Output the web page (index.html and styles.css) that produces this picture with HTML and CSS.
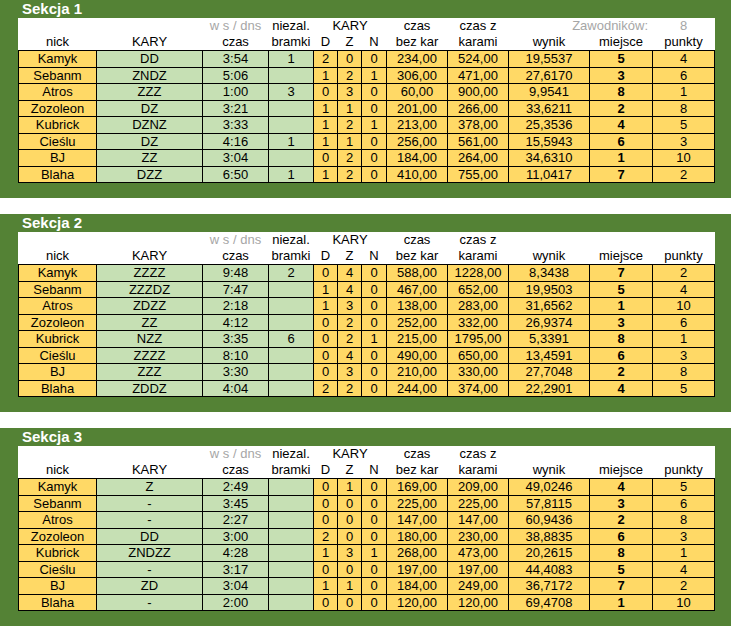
FILE: index.html
```html
<!DOCTYPE html>
<html lang="pl">
<head>
<meta charset="utf-8">
<title>Sekcje</title>
<link rel="stylesheet" href="styles.css">
</head>
<body>

<section class="sec">
  <h2 class="title">Sekcja 1</h2>
  <div class="head">
    <span></span><span></span><span class="grey">w s / dns</span><span>niezal.</span><span class="span3">KARY</span><span>czas</span><span>czas z</span><span class="grey span2 right">Zawodników:</span><span class="grey">8</span>
    <span>nick</span><span>KARY</span><span>czas</span><span>bramki</span><span>D</span><span>Z</span><span>N</span><span>bez kar</span><span>karami</span><span>wynik</span><span>miejsce</span><span>punkty</span>
  </div>
  <div class="data">
    <div class="row"><span>Kamyk</span><span>DD</span><span>3:54</span><span>1</span><span>2</span><span>0</span><span>0</span><span>234,00</span><span>524,00</span><span>19,5537</span><span>5</span><span>4</span></div>
    <div class="row"><span>Sebanm</span><span>ZNDZ</span><span>5:06</span><span></span><span>1</span><span>2</span><span>1</span><span>306,00</span><span>471,00</span><span>27,6170</span><span>3</span><span>6</span></div>
    <div class="row"><span>Atros</span><span>ZZZ</span><span>1:00</span><span>3</span><span>0</span><span>3</span><span>0</span><span>60,00</span><span>900,00</span><span>9,9541</span><span>8</span><span>1</span></div>
    <div class="row"><span>Zozoleon</span><span>DZ</span><span>3:21</span><span></span><span>1</span><span>1</span><span>0</span><span>201,00</span><span>266,00</span><span>33,6211</span><span>2</span><span>8</span></div>
    <div class="row"><span>Kubrick</span><span>DZNZ</span><span>3:33</span><span></span><span>1</span><span>2</span><span>1</span><span>213,00</span><span>378,00</span><span>25,3536</span><span>4</span><span>5</span></div>
    <div class="row"><span>Cieślu</span><span>DZ</span><span>4:16</span><span>1</span><span>1</span><span>1</span><span>0</span><span>256,00</span><span>561,00</span><span>15,5943</span><span>6</span><span>3</span></div>
    <div class="row"><span>BJ</span><span>ZZ</span><span>3:04</span><span></span><span>0</span><span>2</span><span>0</span><span>184,00</span><span>264,00</span><span>34,6310</span><span>1</span><span>10</span></div>
    <div class="row"><span>Blaha</span><span>DZZ</span><span>6:50</span><span>1</span><span>1</span><span>2</span><span>0</span><span>410,00</span><span>755,00</span><span>11,0417</span><span>7</span><span>2</span></div>
  </div>
</section>

<section class="sec">
  <h2 class="title">Sekcja 2</h2>
  <div class="head">
    <span></span><span></span><span class="grey">w s / dns</span><span>niezal.</span><span class="span3">KARY</span><span>czas</span><span>czas z</span><span class="span2"></span><span></span>
    <span>nick</span><span>KARY</span><span>czas</span><span>bramki</span><span>D</span><span>Z</span><span>N</span><span>bez kar</span><span>karami</span><span>wynik</span><span>miejsce</span><span>punkty</span>
  </div>
  <div class="data">
    <div class="row"><span>Kamyk</span><span>ZZZZ</span><span>9:48</span><span>2</span><span>0</span><span>4</span><span>0</span><span>588,00</span><span>1228,00</span><span>8,3438</span><span>7</span><span>2</span></div>
    <div class="row"><span>Sebanm</span><span>ZZZDZ</span><span>7:47</span><span></span><span>1</span><span>4</span><span>0</span><span>467,00</span><span>652,00</span><span>19,9503</span><span>5</span><span>4</span></div>
    <div class="row"><span>Atros</span><span>ZDZZ</span><span>2:18</span><span></span><span>1</span><span>3</span><span>0</span><span>138,00</span><span>283,00</span><span>31,6562</span><span>1</span><span>10</span></div>
    <div class="row"><span>Zozoleon</span><span>ZZ</span><span>4:12</span><span></span><span>0</span><span>2</span><span>0</span><span>252,00</span><span>332,00</span><span>26,9374</span><span>3</span><span>6</span></div>
    <div class="row"><span>Kubrick</span><span>NZZ</span><span>3:35</span><span>6</span><span>0</span><span>2</span><span>1</span><span>215,00</span><span>1795,00</span><span>5,3391</span><span>8</span><span>1</span></div>
    <div class="row"><span>Cieślu</span><span>ZZZZ</span><span>8:10</span><span></span><span>0</span><span>4</span><span>0</span><span>490,00</span><span>650,00</span><span>13,4591</span><span>6</span><span>3</span></div>
    <div class="row"><span>BJ</span><span>ZZZ</span><span>3:30</span><span></span><span>0</span><span>3</span><span>0</span><span>210,00</span><span>330,00</span><span>27,7048</span><span>2</span><span>8</span></div>
    <div class="row"><span>Blaha</span><span>ZDDZ</span><span>4:04</span><span></span><span>2</span><span>2</span><span>0</span><span>244,00</span><span>374,00</span><span>22,2901</span><span>4</span><span>5</span></div>
  </div>
</section>

<section class="sec">
  <h2 class="title">Sekcja 3</h2>
  <div class="head">
    <span></span><span></span><span class="grey">w s / dns</span><span>niezal.</span><span class="span3">KARY</span><span>czas</span><span>czas z</span><span class="span2"></span><span></span>
    <span>nick</span><span>KARY</span><span>czas</span><span>bramki</span><span>D</span><span>Z</span><span>N</span><span>bez kar</span><span>karami</span><span>wynik</span><span>miejsce</span><span>punkty</span>
  </div>
  <div class="data">
    <div class="row"><span>Kamyk</span><span>Z</span><span>2:49</span><span></span><span>0</span><span>1</span><span>0</span><span>169,00</span><span>209,00</span><span>49,0246</span><span>4</span><span>5</span></div>
    <div class="row"><span>Sebanm</span><span>-</span><span>3:45</span><span></span><span>0</span><span>0</span><span>0</span><span>225,00</span><span>225,00</span><span>57,8115</span><span>3</span><span>6</span></div>
    <div class="row"><span>Atros</span><span>-</span><span>2:27</span><span></span><span>0</span><span>0</span><span>0</span><span>147,00</span><span>147,00</span><span>60,9436</span><span>2</span><span>8</span></div>
    <div class="row"><span>Zozoleon</span><span>DD</span><span>3:00</span><span></span><span>2</span><span>0</span><span>0</span><span>180,00</span><span>230,00</span><span>38,8835</span><span>6</span><span>3</span></div>
    <div class="row"><span>Kubrick</span><span>ZNDZZ</span><span>4:28</span><span></span><span>1</span><span>3</span><span>1</span><span>268,00</span><span>473,00</span><span>20,2615</span><span>8</span><span>1</span></div>
    <div class="row"><span>Cieślu</span><span>-</span><span>3:17</span><span></span><span>0</span><span>0</span><span>0</span><span>197,00</span><span>197,00</span><span>44,4083</span><span>5</span><span>4</span></div>
    <div class="row"><span>BJ</span><span>ZD</span><span>3:04</span><span></span><span>1</span><span>1</span><span>0</span><span>184,00</span><span>249,00</span><span>36,7172</span><span>7</span><span>2</span></div>
    <div class="row"><span>Blaha</span><span>-</span><span>2:00</span><span></span><span>0</span><span>0</span><span>0</span><span>120,00</span><span>120,00</span><span>69,4708</span><span>1</span><span>10</span></div>
  </div>
</section>

</body>
</html>
```
FILE: styles.css
```css
html, body {
  margin: 0;
  padding: 0;
  background: #ffffff;
}

body {
  font-family: "Liberation Sans", Arial, sans-serif;
  font-size: 13px;
  color: #000000;
  width: 731px;
}

.sec {
  background: #548235;
  height: 198px;
  box-sizing: border-box;
  padding: 0 16px 0 18px;
  margin-bottom: 16px;
}

.title {
  margin: 0;
  height: 18px;
  line-height: 18px;
  padding-left: 4px;
  font-size: 15px;
  font-weight: bold;
  color: #ffffff;
}

.head,
.data {
  display: grid;
  grid-template-columns: 77px 105px 65px 44px 23px 23px 24px 60px 60px 80px 62px 61px;
  column-gap: 1px;
  width: 697px;
  box-sizing: border-box;
}

.head {
  background: #ffffff;
  padding: 0 1px;
  grid-template-rows: 16px 16px;
}

.head > span {
  text-align: center;
  line-height: 16px;
  white-space: nowrap;
}

.head .grey {
  color: #a6a6a6;
}

.head .span3 {
  grid-column: span 3;
}

.head .span2 {
  grid-column: span 2;
}

.head .right {
  text-align: right;
  padding-right: 4px;
}

.data {
  background: #000000;
  border: 1px solid #000000;
  row-gap: 1px;
  grid-template-rows: repeat(4, 16px 15px);
}

.row {
  display: contents;
}

.row > span {
  background: #ffd966;
  text-align: center;
  line-height: 16px;
  white-space: nowrap;
}

.row > span:nth-child(2),
.row > span:nth-child(3),
.row > span:nth-child(4) {
  background: #c6e0b4;
}

.row > span:nth-child(11) {
  font-weight: bold;
}
```
